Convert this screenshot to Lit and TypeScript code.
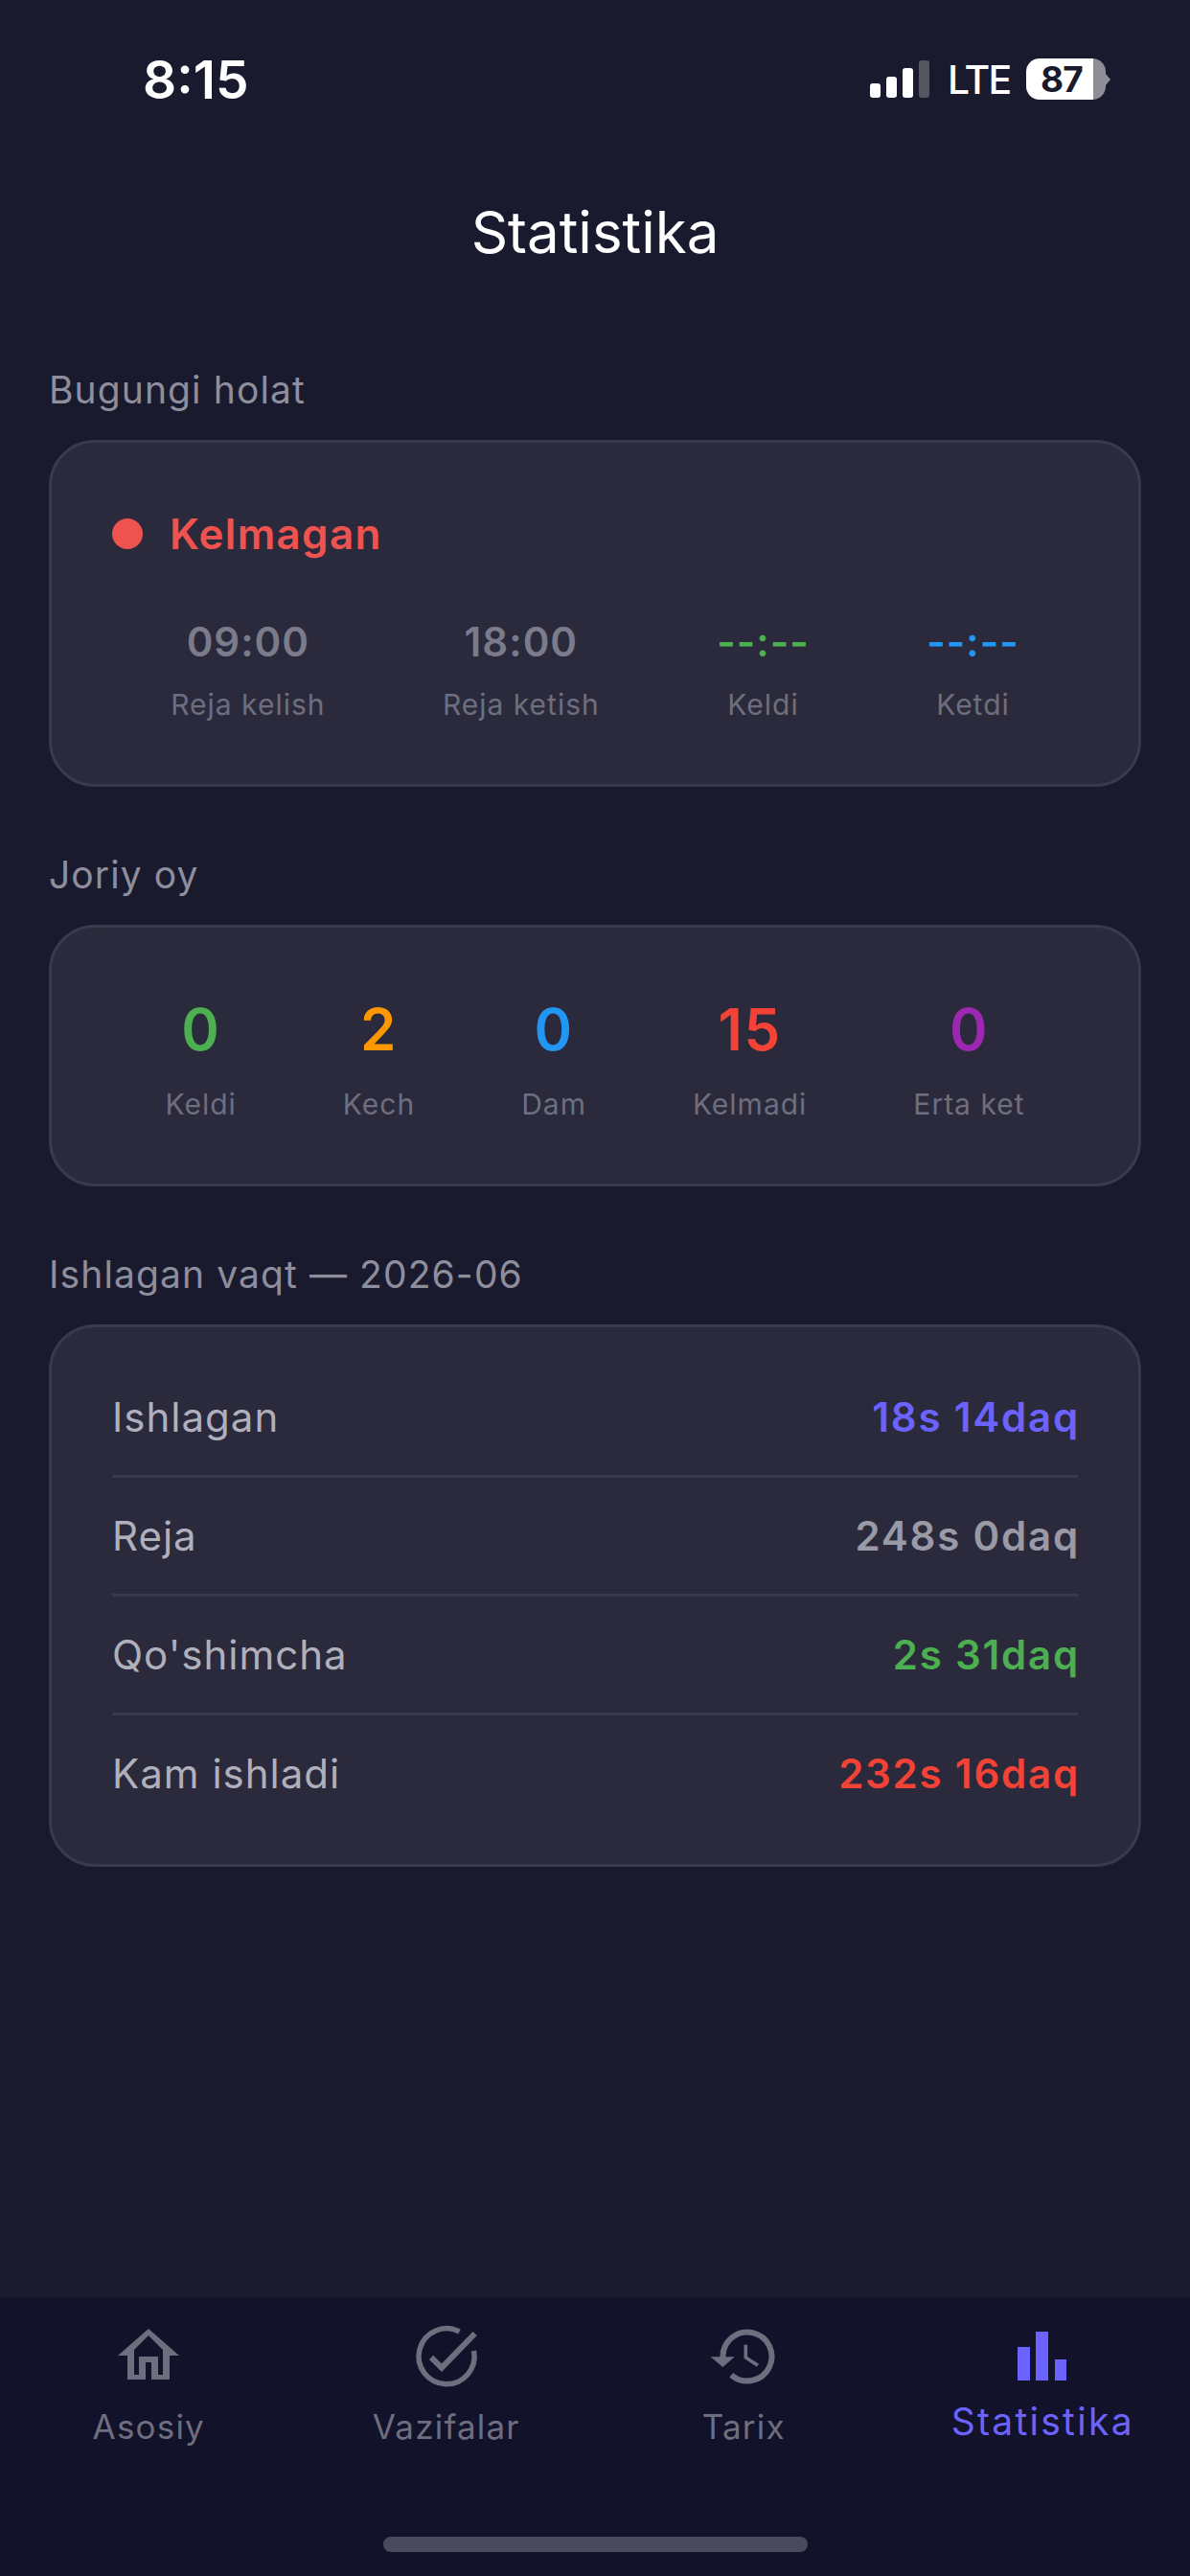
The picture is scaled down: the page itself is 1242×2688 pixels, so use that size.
import { LitElement, html, css, svg } from "lit";
import { customElement } from "lit/decorators.js";

const homeIcon = svg`<path d="M36 8 L68 36 H58 V61 H39 V43 H33 V61 H14 V36 H4 Z M36 15 L21 30 V56 H26 V37 H46 V56 H51 V30 Z" fill-rule="evenodd" fill="currentColor"/>`;
const checkIcon = svg`<path d="M49.5 11 A29 29 0 1 0 64.5 31" fill="none" stroke="currentColor" stroke-width="5.5"/><path d="M20 38 L31 48.7 L65.7 13" fill="none" stroke="currentColor" stroke-width="6"/>`;
const clockIcon = svg`<path d="M14.5 38 A25.5 25.5 0 1 1 23.3 56.3" fill="none" stroke="currentColor" stroke-width="6"/><path d="M1.7 37.3 L26.7 37.3 L14.3 48 Z" fill="currentColor"/><path d="M38.3 24.7 V38 L51 46.3" fill="none" stroke="currentColor" stroke-width="3.6"/>`;
const barsIcon = svg`<rect x="11" y="27" width="13" height="35" fill="currentColor"/><rect x="30" y="11" width="13" height="51" fill="currentColor"/><rect x="50" y="40" width="12" height="22" fill="currentColor"/>`;

@customElement("app-root")
export class AppRoot extends LitElement {
  static styles = css`
    :host {
      display: flex;
      flex-direction: column;
      width: 1242px;
      height: 2688px;
      background: #1a1a2e;
      font-family: Inter, "Noto Sans", sans-serif;
      overflow: hidden;
    }
    .status {
      height: 132px;
      box-sizing: border-box;
      padding: 50px 83px 0 149px;
      display: flex;
      justify-content: space-between;
      align-items: flex-start;
      color: #fff;
      flex: none;
    }
    .time { font-size: 55px; line-height: 66px; font-weight: 600; }
    .indicators { display: flex; align-items: center; height: 65px; }
    .signal { display: flex; align-items: flex-end; gap: 6px; height: 39px; }
    .signal i { display: block; width: 11px; background: #fff; border-radius: 3px; }
    .signal i.off { background: #55555f; }
    .s1 { height: 15px; } .s2 { height: 22px; } .s3 { height: 31px; } .s4 { height: 39px; }
    .lte { font-size: 41px; font-weight: 500; line-height: 50px; margin-left: 19px; width: 63px; letter-spacing: -1.8px; white-space: nowrap; }
    .battery {
      margin-left: 19px;
      width: 83px;
      height: 43px;
      box-sizing: border-box;
      border-radius: 14px;
      background: linear-gradient(to right, #fff 84%, #8e8e96 84%);
      color: #1a1a2e;
      font-size: 37px;
      font-weight: 700;
      line-height: 43px;
      padding-left: 15px;
      letter-spacing: -0.8px;
    }
    .nub {
      width: 0;
      height: 0;
      border-left: 5px solid #8e8e96;
      border-top: 6px solid transparent;
      border-bottom: 6px solid transparent;
    }
    .title {
      flex: none;
      height: 100px;
      text-align: center;
      color: #fff;
      font-size: 60px;
      line-height: 100px;
      font-weight: 400;
      margin: 60px 0 0;
    }
    main { flex: 1; padding: 91px 51px 0; min-height: 0; }
    .label {
      font-size: 39px;
      line-height: 48px;
      height: 48px;
      color: #8e8e9c;
      letter-spacing: 1.1px;
      margin-bottom: 28px;
    }
    .card {
      box-sizing: border-box;
      background: #2a2a3c;
      border: 3px solid #3a3a4e;
      border-radius: 48px;
      margin-bottom: 68px;
    }
    .today { padding: 63px; height: 362px; }
    .state { display: flex; align-items: center; height: 64px; gap: 28px; color: #ef5350; font-size: 44px; font-weight: 600; letter-spacing: 1.3px; }
    .dot { width: 32px; height: 32px; border-radius: 50%; background: #ef5350; }
    .times { display: flex; justify-content: space-around; margin-top: 56px; }
    .cell { text-align: center; }
    .tv { font-size: 42px; line-height: 50px; font-weight: 600; color: #7b7b8b; letter-spacing: 1px; }
    .tv.green { color: #4caf50; }
    .tv.blue { color: #2196f3; }
    .cap { font-size: 30px; line-height: 40px; color: #6e6e7e; margin-top: 20px; letter-spacing: 1px; }
    .month { padding: 63px; height: 273px; display: flex; justify-content: space-around; }
    .num { font-size: 60px; line-height: 86px; font-weight: 600; letter-spacing: 1.5px; }
    .month .cap { margin-top: 15px; }
    .hours { padding: 33px 63px; height: 566px; }
    .row {
      display: flex;
      justify-content: space-between;
      align-items: center;
      height: 121px;
      border-bottom: 3px solid #3a3a4e;
      font-size: 42px;
      color: #b0b0bc;
      letter-spacing: 1px;
    }
    .row:last-child { border-bottom: none; }
    .row b { font-weight: 600; letter-spacing: 1.8px; margin-right: -2px; }
    nav {
      flex: none;
      height: 290px;
      box-sizing: border-box;
      background: #12122b;
      display: grid;
      grid-template-columns: repeat(4, 1fr);
      padding-top: 24px;
      position: relative;
    }
    .tab { display: flex; flex-direction: column; align-items: center; color: #6e6e7e; }
    .tab svg { width: 72px; height: 72px; display: block; }
    .tab span { font-size: 35px; line-height: 44px; margin-top: 16px; letter-spacing: 1.2px; }
    .tab.on { color: #6c63ff; }
    .tab.on span { font-size: 39px; margin: 11px 0 0 3px; letter-spacing: 2.3px; }
    .home {
      position: absolute;
      left: 400px;
      bottom: 25px;
      width: 443px;
      height: 16px;
      border-radius: 8px;
      background: #4a4a5e;
    }
  `;

  render() {
    const cell = (v: string, c: string, cls = "") => html`<div class="cell"><div class="tv ${cls}">${v}</div><div class="cap">${c}</div></div>`;
    const stat = (v: string, c: string, color: string) => html`<div class="cell"><div class="num" style="color:${color}">${v}</div><div class="cap">${c}</div></div>`;
    const row = (l: string, v: string, color: string) => html`<div class="row"><span>${l}</span><b style="color:${color}">${v}</b></div>`;
    const tab = (icon: unknown, l: string, on = false) => html`<div class="tab ${on ? "on" : ""}"><svg viewBox="0 0 72 72">${icon}</svg><span>${l}</span></div>`;
    return html`
      <div class="status">
        <div class="time">8:15</div>
        <div class="indicators">
          <div class="signal"><i class="s1"></i><i class="s2"></i><i class="s3"></i><i class="s4 off"></i></div>
          <div class="lte">LTE</div>
          <div class="battery">87</div>
          <div class="nub"></div>
        </div>
      </div>
      <h1 class="title">Statistika</h1>
      <main>
        <div class="label">Bugungi holat</div>
        <div class="card today">
          <div class="state"><span class="dot"></span>Kelmagan</div>
          <div class="times">
            ${cell("09:00", "Reja kelish")}
            ${cell("18:00", "Reja ketish")}
            ${cell("--:--", "Keldi", "green")}
            ${cell("--:--", "Ketdi", "blue")}
          </div>
        </div>
        <div class="label">Joriy oy</div>
        <div class="card month">
          ${stat("0", "Keldi", "#4caf50")}
          ${stat("2", "Kech", "#ff9800")}
          ${stat("0", "Dam", "#2196f3")}
          ${stat("15", "Kelmadi", "#f44336")}
          ${stat("0", "Erta ket", "#9c27b0")}
        </div>
        <div class="label">Ishlagan vaqt — 2026-06</div>
        <div class="card hours">
          ${row("Ishlagan", "18s 14daq", "#6c63ff")}
          ${row("Reja", "248s 0daq", "#9a9aa6")}
          ${row("Qo'shimcha", "2s 31daq", "#4caf50")}
          ${row("Kam ishladi", "232s 16daq", "#f44336")}
        </div>
      </main>
      <nav>
        ${tab(homeIcon, "Asosiy")}
        ${tab(checkIcon, "Vazifalar")}
        ${tab(clockIcon, "Tarix")}
        ${tab(barsIcon, "Statistika", true)}
        <div class="home"></div>
      </nav>
    `;
  }
}
